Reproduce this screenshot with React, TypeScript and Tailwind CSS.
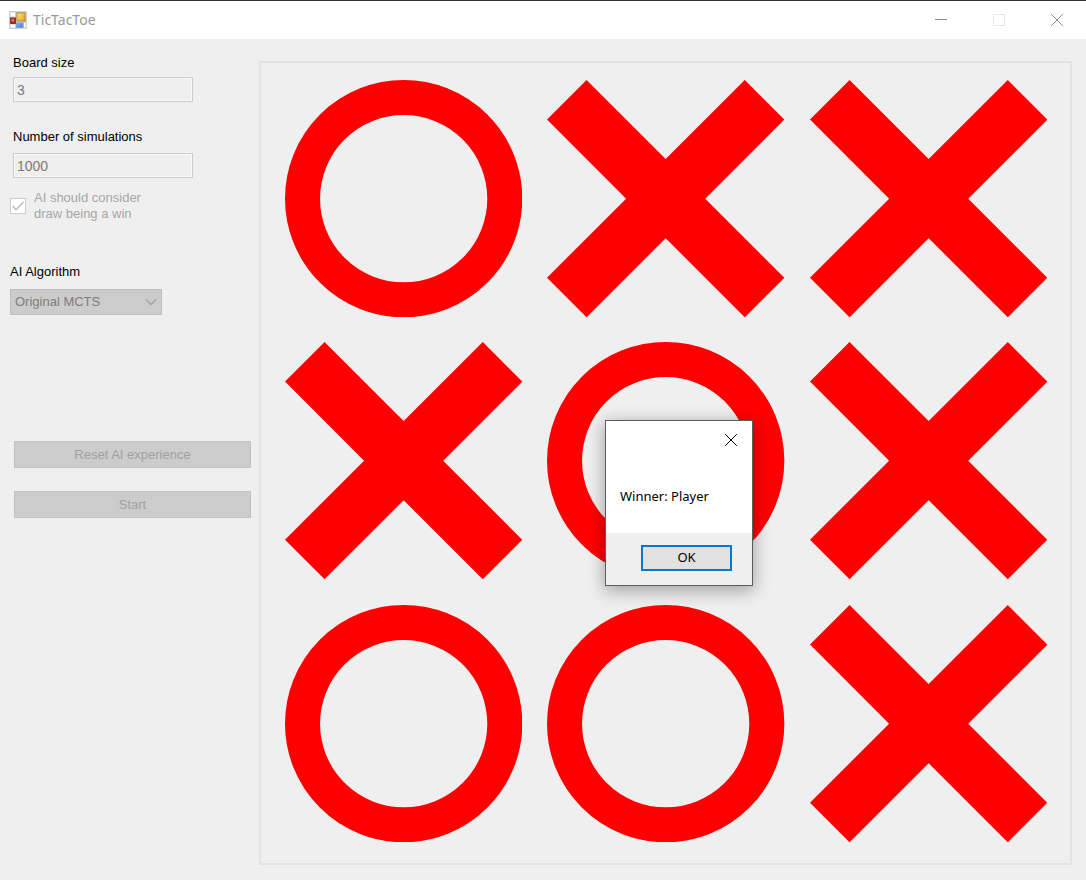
import { useState } from "react";

type Mark = "X" | "O";

const board: Mark[] = ["O", "X", "X", "X", "O", "X", "O", "O", "X"];

function MarkShape({ mark }: { mark: Mark }) {
  return (
    <svg viewBox="0 0 237 237" className="block w-full" role="img" aria-label={mark}>
      {mark === "O" ? (
        <circle cx="118.5" cy="118.5" r="101" fill="none" stroke="#ff0000" strokeWidth="35" />
      ) : (
        <polygon
          fill="#ff0000"
          points="39.5,0 118.5,79 197.5,0 237,39.5 158,118.5 237,197.5 197.5,237 118.5,158 39.5,237 0,197.5 79,118.5 0,39.5"
        />
      )}
    </svg>
  );
}

function AppIcon() {
  return (
    <svg width="18" height="18" viewBox="0 0 18 18" aria-hidden="true">
      <defs>
        <linearGradient id="gold" x1="0" y1="0" x2="1" y2="1">
          <stop offset="0" stopColor="#ffe98a" />
          <stop offset="1" stopColor="#e0a010" />
        </linearGradient>
        <linearGradient id="blue" x1="0" y1="0" x2="1" y2="1">
          <stop offset="0" stopColor="#86b4fb" />
          <stop offset="1" stopColor="#3f78dc" />
        </linearGradient>
      </defs>
      <rect width="18" height="18" fill="#cfcfcf" />
      <rect x="1.5" y="1.5" width="4.5" height="4" fill="#fff" />
      <rect x="1.5" y="13.5" width="4.5" height="3" fill="#fff" />
      <rect x="15" y="12" width="1.5" height="4.5" fill="#fff" />
      <rect x="1" y="6.5" width="6" height="6.5" fill="#a02c28" />
      <rect x="2.5" y="8" width="2.5" height="2.5" fill="#e07a70" />
      <rect x="8" y="2" width="8" height="8" fill="url(#gold)" stroke="#b78a2a" />
      <rect x="7.5" y="12" width="6.5" height="4.5" fill="url(#blue)" stroke="#7ba0e0" />
    </svg>
  );
}

function CloseIcon() {
  return (
    <svg width="12" height="12" viewBox="0 0 12 12" fill="none" stroke="currentColor" aria-hidden="true">
      <path d="M0.2 0.2 L11.8 11.8 M11.8 0.2 L0.2 11.8" />
    </svg>
  );
}

const field =
  "block h-[25px] w-[180px] border border-[#cccccc] bg-[#efefef] px-[3px] text-sm text-[#7a7a7a] shadow-[inset_0_0_0_1px_#fafafa]";
const action =
  "flex h-[27px] w-full items-center justify-center border border-[#c1c1c1] bg-[#cccccc] text-[#a0a0a0]";

export default function App() {
  const [open, setOpen] = useState(true);

  return (
    <div className="relative flex min-h-screen flex-col bg-[#efefef] font-['Liberation_Sans',Arial,sans-serif] text-[13px] text-black">
      <header className="flex h-[39px] items-center border-t border-[#35323a] bg-white pl-[9px] text-[#8c8c8c]">
        <AppIcon />
        <h1 className="ml-1.5 flex-1 font-['Noto_Sans','Open_Sans',sans-serif] text-sm font-normal text-[#999999]">TicTacToe</h1>
        <button type="button" aria-label="Minimize" className="flex h-full w-[58px] items-center justify-center">
          <svg width="12" height="12" viewBox="0 0 12 12" aria-hidden="true">
            <path d="M0 5.5H12" stroke="#8c8c8c" />
          </svg>
        </button>
        <button type="button" aria-label="Maximize" disabled className="flex h-full w-[58px] items-center justify-center">
          <svg width="12" height="12" viewBox="0 0 12 12" aria-hidden="true">
            <rect x="0.5" y="0.5" width="11" height="11" fill="none" stroke="#e6e6e6" />
          </svg>
        </button>
        <button type="button" aria-label="Close" className="flex h-full w-[58px] items-center justify-center">
          <CloseIcon />
        </button>
      </header>

      <main className="flex flex-1 items-start pr-[14px] pb-[15px]">
        <form className="w-[259px] shrink-0 pt-3.5 pr-2 pl-[13px]">
          <label htmlFor="size" className="block leading-5">Board size</label>
          <input id="size" className={`mt-1 ${field}`} defaultValue="3" disabled />

          <label htmlFor="sims" className="mt-[25px] block leading-5">Number of simulations</label>
          <input id="sims" className={`mt-1.5 ${field}`} defaultValue="1000" disabled />

          <label className="-ml-[3px] mt-3 flex items-center gap-2 leading-4 text-[#a6a6a6]">
            <span className="grid size-4 shrink-0">
              <input
                type="checkbox"
                defaultChecked
                disabled
                className="col-start-1 row-start-1 size-4 appearance-none border border-[#cccccc] bg-white"
              />
              <svg viewBox="0 0 16 16" className="col-start-1 row-start-1 size-4" fill="none" stroke="#bfbfbf" strokeWidth="1.6" aria-hidden="true">
                <path d="M2.5 8 L6 11.5 L13.5 4" />
              </svg>
            </span>
            <span>
              AI should consider
              <br />
              draw being a win
            </span>
          </label>

          <div className="-ml-[3px]">
            <label htmlFor="algorithm" className="mt-10 block leading-5">AI Algorithm</label>
            <div className="mt-[7px] grid h-[26px] w-[152px] items-center">
              <select
                id="algorithm"
                disabled
                className="col-start-1 row-start-1 h-full w-full appearance-none border border-[#bfbfbf] bg-[#cccccc] px-1 text-[#7d7d7d] opacity-100"
              >
                <option>Original MCTS</option>
              </select>
              <svg width="12" height="8" viewBox="0 0 12 8" className="col-start-1 row-start-1 mr-[5px] justify-self-end" fill="none" stroke="#a3a3a3" strokeWidth="1.3" aria-hidden="true">
                <path d="M1 1.5 L6 6.5 L11 1.5" />
              </svg>
            </div>
          </div>

          <div className="mt-[126px] ml-px flex flex-col gap-[23px]">
            <button type="button" disabled className={action}>Reset AI experience</button>
            <button type="button" disabled className={action}>Start</button>
          </div>
        </form>

        <section aria-label="Board" className="mt-[22px] min-w-0 flex-1 border-2 border-[#e3e3e3] pt-[17px] pr-[23px] pb-[21px] pl-6">
          <div className="grid grid-cols-3 gap-[25px]">
            {board.map((mark, i) => (
              <MarkShape key={i} mark={mark} />
            ))}
          </div>
        </section>
      </main>

      {open && (
        <div
          role="dialog"
          aria-label="Game result"
          className="absolute top-[420px] left-[605px] flex w-[148px] flex-col border border-[#5c5c5c] bg-white font-['Noto_Sans','Open_Sans',sans-serif] shadow-[0_4px_16px_1px_rgba(0,0,0,0.32)]"
        >
          <button type="button" aria-label="Close dialog" onClick={() => setOpen(false)} className="mt-[13px] mr-[15px] self-end">
            <CloseIcon />
          </button>
          <p className="mt-10 mb-[27px] pl-3.5 leading-5">Winner: Player</p>
          <div className="flex justify-end bg-[#efefef] px-5 pt-3 pb-3.5">
            <button
              type="button"
              onClick={() => setOpen(false)}
              className="flex h-[26px] w-[91px] items-center justify-center border-2 border-[#0078d7] bg-[#e1e1e1]"
            >
              OK
            </button>
          </div>
        </div>
      )}
    </div>
  );
}
